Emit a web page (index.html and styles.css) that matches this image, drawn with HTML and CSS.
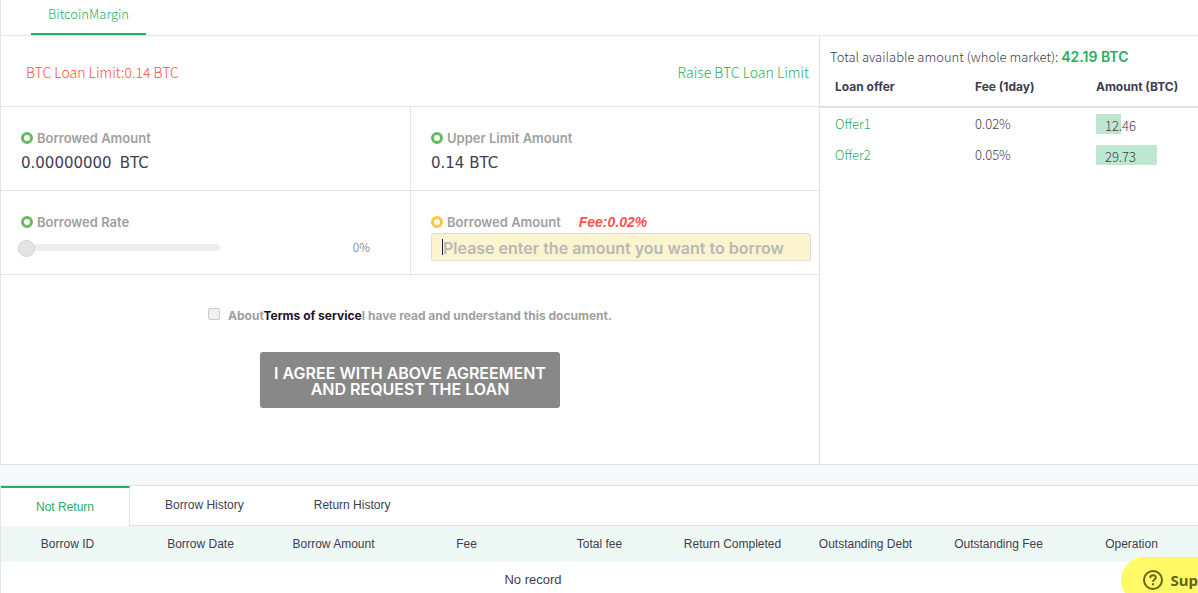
FILE: index.html
```html
<!DOCTYPE html>
<html lang="en">
<head>
<meta charset="utf-8">
<meta name="viewport" content="width=device-width, initial-scale=1">
<title>BitcoinMargin</title>
<link rel="stylesheet" href="styles.css">
</head>
<body>
<nav class="top-nav">
  <a class="top-tab" href="#margin">BitcoinMargin</a>
</nav>
<main class="loan">
  <section class="loan-form">
    <div class="limit-bar">
      <span class="limit">BTC Loan Limit:0.14 BTC</span>
      <a class="raise" href="#raise">Raise BTC Loan Limit</a>
    </div>
    <div class="cells">
      <div class="cell">
        <div class="cell-title"><span class="ring"></span>Borrowed Amount</div>
        <div class="value"><span>0.00000000</span><span>BTC</span></div>
      </div>
      <div class="cell">
        <div class="cell-title"><span class="ring"></span>Upper Limit Amount</div>
        <div class="value">0.14 BTC</div>
      </div>
      <div class="cell">
        <label class="cell-title" for="rate"><span class="ring"></span>Borrowed Rate</label>
        <div class="rate">
          <input class="slider" id="rate" type="range" min="0" max="100" value="0">
          <output class="percent" for="rate">0%</output>
        </div>
      </div>
      <div class="cell cell-entry">
        <label class="cell-title" for="amount"><span class="ring ring-amber"></span>Borrowed Amount <em class="fee">Fee:0.02%</em></label>
        <div class="amount-box">
          <input class="amount" id="amount" type="text" placeholder="Please enter the amount you want to borrow">
        </div>
      </div>
    </div>
    <div class="agreement">
      <div class="terms">
        <input class="check" id="agree" type="checkbox">
        <label for="agree">About<a class="terms-link" href="#terms">Terms of service</a>I have read and understand this document.</label>
      </div>
      <button class="submit" type="button">I AGREE WITH ABOVE AGREEMENT AND REQUEST THE LOAN</button>
    </div>
  </section>
  <aside class="market">
    <p class="total">Total available amount (whole market): <strong class="total-value">42.19 BTC</strong></p>
    <table class="offers">
      <thead>
        <tr><th class="col-offer">Loan offer</th><th class="col-fee">Fee (1day)</th><th>Amount (BTC)</th></tr>
      </thead>
      <tbody>
        <tr><td><a class="offer" href="#offer1">Offer1</a></td><td>0.02%</td><td><div class="depth depth-small">12.46</div></td></tr>
        <tr><td><a class="offer" href="#offer2">Offer2</a></td><td>0.05%</td><td><div class="depth depth-large">29.73</div></td></tr>
      </tbody>
    </table>
  </aside>
</main>
<section class="history">
  <div class="tabs" role="tablist">
    <button class="tab tab-active" type="button" role="tab" aria-selected="true">Not Return</button>
    <button class="tab" type="button" role="tab" aria-selected="false">Borrow History</button>
    <button class="tab" type="button" role="tab" aria-selected="false">Return History</button>
  </div>
  <table class="records">
    <thead>
      <tr><th>Borrow ID</th><th>Borrow Date</th><th>Borrow Amount</th><th>Fee</th><th>Total fee</th><th>Return Completed</th><th>Outstanding Debt</th><th>Outstanding Fee</th><th>Operation</th></tr>
    </thead>
    <tbody>
      <tr><td colspan="8">No record</td><td></td></tr>
    </tbody>
  </table>
</section>
<button class="support" type="button">
  <svg width="20" height="20" viewBox="0 0 20 20" fill="none" stroke="currentColor" stroke-width="2" aria-hidden="true">
    <circle cx="10" cy="10" r="9"/>
    <path d="M7.200 8c0-3.700 5.600-3.700 5.600-.5 0 2-2.800 2-2.800 4.300"/>
    <path d="M10 13.300v2"/>
  </svg>
  <span>Sup</span>
</button>
</body>
</html>
```
FILE: styles.css
```css
* { box-sizing: border-box; }

body {
  margin: 0;
  background: #f7f8fa;
  color: #3f3d4f;
  font: 13px/16px "Noto Sans CJK JP", "Liberation Sans", sans-serif;
  font-weight: 300;
}

a { color: #27ae60; text-decoration: none; }
button, input { font: inherit; }

.top-nav {
  display: flex;
  padding-left: 30px;
  background: #fff;
  border: solid #dfe4f0;
  border-width: 0 0 1px 1px;
}
.top-tab {
  padding: 6px 17px 11px;
  border-bottom: 2px solid #27ae60;
}

.loan {
  display: grid;
  grid-template-columns: 819fr 379fr;
  background: #fff;
  border: solid #dfe4f0;
  border-width: 0 0 1px;
}
.loan-form { border-left: 1px solid #dfe4f0; }
.limit-bar {
  display: flex;
  justify-content: space-between;
  align-items: center;
  height: 71px;
  padding: 2px 10px 0 25px;
  border-bottom: 1px solid #dfe4f0;
  font-size: 14px;
}
.limit { color: #ff503c; }

.cells { display: grid; grid-template-columns: 1fr 1fr; }
.cell {
  height: 84px;
  padding: 23px 20px 0;
  border-bottom: 1px solid #dfe4f0;
}
.cell:nth-child(even) { border-left: 1px solid #dfe4f0; }
.cell-entry { padding-right: 8px; }
.cell-title {
  display: flex;
  align-items: center;
  gap: 4px;
  color: #a0a0a0;
  font: 600 13px/16px Inter, sans-serif;
}
.ring {
  width: 12px;
  height: 12px;
  border: 3px solid #66bb60;
  border-radius: 50%;
}
.ring-amber { border-color: #ffc640; }
.fee {
  margin-left: 14px;
  color: #ff5050;
  font: italic bold 14px/16px "Liberation Sans", sans-serif;
}
.value {
  display: flex;
  gap: 8px;
  padding-top: 7px;
  font: 15px/20px "DejaVu Sans", sans-serif;
}
.rate {
  display: flex;
  justify-content: space-between;
  align-items: center;
  padding: 7px 20px 0 0;
}
.slider {
  width: 202px;
  height: 20px;
  margin: 0 0 0 -3px;
  appearance: none;
  background: none;
}
.slider::-webkit-slider-runnable-track {
  height: 7px;
  background: #ededed;
  border-radius: 4px;
}
.slider::-webkit-slider-thumb {
  appearance: none;
  width: 17px;
  height: 17px;
  margin-top: -4px;
  background: #e4e4e4;
  border: 1px solid #d2d2d2;
  border-radius: 50%;
}
.percent { color: #666; font-size: 12px; }
.amount-box {
  display: flex;
  align-items: center;
  height: 28px;
  margin-top: 3px;
  padding-left: 10px;
  background: #fcf3cf;
  border: 1px solid #ddd;
  border-radius: 3px;
}
.amount-box::before {
  content: "";
  width: 1px;
  height: 16px;
  background: #222;
}
.amount {
  flex: 1;
  min-width: 0;
  padding: 2px 0 0;
  background: none;
  border: 0;
  outline: 0;
  font: 600 16px/20px Inter, sans-serif;
}
.amount::placeholder { color: #b8b8b8; }

.agreement {
  display: flex;
  flex-direction: column;
  align-items: center;
  gap: 28px;
  padding: 33px 20px 56px;
}
.terms {
  display: flex;
  gap: 8px;
  color: #a0a0a0;
  font: 700 12px/16px Inter, sans-serif;
}
.terms-link { color: #24122c; }
.check {
  appearance: none;
  width: 12px;
  height: 12px;
  margin: 0;
  background: #f0f0f0;
  border: 1px solid #ccc;
  border-radius: 2px;
}
.submit {
  width: 300px;
  height: 56px;
  padding: 2px 8px 0;
  background: #888;
  border: 0;
  border-radius: 3px;
  color: #fff;
  font: 600 16px/16px Inter, sans-serif;
}

.market { border-left: 1px solid #dfe4f0; }
.total { margin: 0; padding: 13px 10px 8px; }
.total-value { color: #27ae60; font: 600 14px/16px Inter, sans-serif; }
.offers {
  width: 100%;
  table-layout: fixed;
  border-collapse: collapse;
  text-align: left;
}
.col-offer { width: 41%; }
.col-fee { width: 32%; }
.offers th {
  height: 34px;
  padding: 6px 0 0;
  vertical-align: top;
  font: 700 12px/16px Inter, sans-serif;
  border-bottom: 2px solid #e0e0e4;
}
.offers th:first-child, .offers td:first-child { padding-left: 15px; }
.offers td { height: 32px; padding: 0; }
.depth {
  height: 20px;
  padding: 4px 0 0 9px;
  background: #bde8cf;
}
.depth-small { width: 25px; }
.depth-large { width: 61px; }

.history {
  margin-top: 20px;
  background: #fff;
  border: solid #dfe4f0;
  border-width: 1px 0 0 1px;
  font: 12px/16px "Liberation Sans", Arial, sans-serif;
}
.tabs { display: flex; }
.tabs::after { content: ""; flex: 1; border-bottom: 1px solid #dfe4f0; }
.tab {
  height: 40px;
  padding: 0 35px 2px;
  background: none;
  border: 0 solid #dfe4f0;
  border-bottom-width: 1px;
  color: inherit;
}
.tab-active {
  padding: 0 35px;
  border-top: 2px solid #27ae60;
  border-right-width: 1px;
  border-bottom: 0;
  color: #27ae60;
}
.records {
  width: 100%;
  table-layout: fixed;
  border-collapse: collapse;
  text-align: center;
}
.records th {
  height: 36px;
  padding: 0;
  background: #eef8f5;
  font-weight: normal;
}
.records td { height: 31px; padding: 5px 0 0; font-size: 13px; }

.support {
  position: fixed;
  right: 0;
  bottom: -10px;
  display: flex;
  align-items: center;
  gap: 8px;
  height: 46px;
  padding: 0 0 0 22px;
  background: #fffa66;
  border: 0;
  border-radius: 23px 0 0 23px;
  color: #666419;
  font: bold 15px/20px "Noto Sans", sans-serif;
}
```
